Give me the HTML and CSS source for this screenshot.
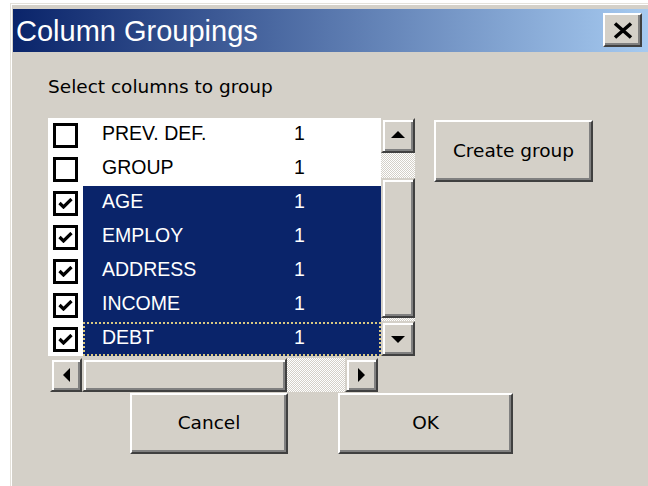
FILE: index.html
```html
<!DOCTYPE html>
<html lang="en">
<head>
<meta charset="utf-8">
<title>Column Groupings</title>
<link rel="stylesheet" href="styles.css">
</head>
<body>
<div class="window">
  <div class="titlebar">
    <span class="title">Column Groupings</span>
    <button class="close" type="button" aria-label="Close">
      <svg width="20" height="17" viewBox="0 0 20 17"><path d="M2 1.5 L18 15.5 M18 1.5 L2 15.5" stroke="#000" stroke-width="3.6" fill="none"/></svg>
    </button>
  </div>
  <div class="content">
    <p class="prompt">Select columns to group</p>
    <div class="main-row">
      <div class="listbox">
        <ul class="rows">
          <li class="row"><span class="check-cell"><span class="check"></span></span><span class="item"><span class="name">PREV. DEF.</span><span class="count">1</span></span></li>
          <li class="row"><span class="check-cell"><span class="check"></span></span><span class="item"><span class="name">GROUP</span><span class="count">1</span></span></li>
          <li class="row selected"><span class="check-cell"><span class="check"><svg width="15" height="11" viewBox="0 0 15 11"><path d="M1.5 5 L5.5 9 L13.5 1" stroke="#000" stroke-width="3.2" fill="none"/></svg></span></span><span class="item"><span class="name">AGE</span><span class="count">1</span></span></li>
          <li class="row selected"><span class="check-cell"><span class="check"><svg width="15" height="11" viewBox="0 0 15 11"><path d="M1.5 5 L5.5 9 L13.5 1" stroke="#000" stroke-width="3.2" fill="none"/></svg></span></span><span class="item"><span class="name">EMPLOY</span><span class="count">1</span></span></li>
          <li class="row selected"><span class="check-cell"><span class="check"><svg width="15" height="11" viewBox="0 0 15 11"><path d="M1.5 5 L5.5 9 L13.5 1" stroke="#000" stroke-width="3.2" fill="none"/></svg></span></span><span class="item"><span class="name">ADDRESS</span><span class="count">1</span></span></li>
          <li class="row selected"><span class="check-cell"><span class="check"><svg width="15" height="11" viewBox="0 0 15 11"><path d="M1.5 5 L5.5 9 L13.5 1" stroke="#000" stroke-width="3.2" fill="none"/></svg></span></span><span class="item"><span class="name">INCOME</span><span class="count">1</span></span></li>
          <li class="row selected focused"><span class="check-cell"><span class="check"><svg width="15" height="11" viewBox="0 0 15 11"><path d="M1.5 5 L5.5 9 L13.5 1" stroke="#000" stroke-width="3.2" fill="none"/></svg></span></span><span class="item"><span class="name">DEBT</span><span class="count">1</span></span></li>
        </ul>
        <div class="vscroll">
          <span class="sb-btn"><span class="arrow up"></span></span>
          <span class="track track-top"></span>
          <span class="thumb thumb-v"></span>
          <span class="track track-bottom"></span>
          <span class="sb-btn"><span class="arrow down"></span></span>
        </div>
        <div class="hscroll">
          <span class="sb-btn sb-left"><span class="arrow left"></span></span>
          <span class="thumb thumb-h"></span>
          <span class="track track-right"></span>
          <span class="sb-btn sb-right"><span class="arrow right"></span></span>
        </div>
      </div>
      <button class="btn create" type="button">Create group</button>
    </div>
    <div class="actions">
      <button class="btn cancel" type="button">Cancel</button>
      <button class="btn ok" type="button">OK</button>
    </div>
  </div>
</div>
</body>
</html>
```
FILE: styles.css
```css
* { box-sizing: border-box; }

html, body {
  margin: 0;
  height: 100%;
  overflow: hidden;
  background: #fff;
}

.window {
  margin: 3px 0 0 10px;
  height: calc(100% - 3px);
  background: #d4d0c8;
  border-top: 1px solid #e4e1da;
  border-left: 1px solid #e4e1da;
  box-shadow: inset 1px 1px #fff;
  padding: 5px 0 0 2px;
}

/* caption */
.titlebar {
  height: 43px;
  display: flex;
  align-items: center;
  justify-content: space-between;
  padding: 0 6px 0 3px;
  background: linear-gradient(to right, #0a246a, #a6caf0);
}

.title {
  color: #fff;
  font-family: "Liberation Sans", Arial, sans-serif;
  font-size: 29px;
  line-height: 1;
  padding-top: 2px;
}

.close {
  width: 39px;
  height: 34px;
  padding: 0;
  margin-top: -1px;
  display: flex;
  align-items: center;
  justify-content: center;
  background: #d4d0c8;
  border: 2px solid;
  border-color: #fff #404040 #404040 #fff;
  box-shadow: inset -2px -2px #808080;
}

/* dialog body */
.content {
  padding-left: 35px;
  font-family: "DejaVu Sans", Verdana, sans-serif;
  font-size: 18.5px;
  color: #000;
}

.prompt {
  margin: 0;
  padding-top: 24px;
  line-height: 22px;
  height: 66px;
}

.main-row {
  display: flex;
  align-items: flex-start;
  gap: 18px;
}

.listbox {
  display: grid;
  grid-template-columns: 333px 35px;
  grid-template-rows: 238px 36px;
}

.rows {
  list-style: none;
  margin: 0;
  padding: 0;
  background: #fff;
  font-family: "Liberation Sans", Arial, sans-serif;
  font-size: 19.5px;
}

.row {
  height: 34px;
  display: flex;
}

.check-cell {
  width: 35px;
  display: flex;
  align-items: center;
  padding-left: 5px;
}

.check {
  width: 25px;
  height: 25px;
  border: 3px solid #000;
  background: #fff;
  display: flex;
  align-items: center;
  justify-content: center;
}

.item {
  flex: 1;
  display: flex;
  align-items: center;
  padding: 0 0 4px 19px;
  color: #000;
}

.selected .item {
  background: #0a246a;
  color: #fff;
}

.focused .item {
  outline: 2px dotted #d9c882;
  outline-offset: -2px;
}

.name { width: 192px; }

/* scroll bars */
.sb-btn, .thumb {
  background: #d4d0c8;
  border: 2px solid;
  border-color: #d4d0c8 #404040 #404040 #d4d0c8;
  box-shadow: inset 2px 2px #fff, inset -2px -2px #808080;
  display: flex;
  align-items: center;
  justify-content: center;
}

.track {
  background-image: repeating-conic-gradient(#fff 0 25%, #d4d0c8 0 50%);
  background-size: 2px 2px;
}

.vscroll {
  width: 34px;
  display: flex;
  flex-direction: column;
}

.vscroll .sb-btn { height: 35px; }
.track-top { height: 25px; }
.thumb-v { height: 140px; }
.track-bottom { height: 3px; }

.hscroll {
  grid-column: 1;
  margin: 2px 0 0 2px;
  height: 34px;
  width: 328px;
  display: flex;
}

.sb-left { width: 32px; }
.thumb-h { width: 205px; }
.track-right { width: 58px; }
.sb-right { width: 33px; }

.arrow {
  width: 0;
  height: 0;
  border: 0 solid transparent;
}

.arrow.up { border-width: 0 7px 7px; border-bottom-color: #000; margin-top: -2px; }
.arrow.down { border-width: 7px 7px 0; border-top-color: #000; margin-top: 2px; }
.arrow.left { border-width: 7px 7px 7px 0; border-right-color: #000; }
.arrow.right { border-width: 7px 0 7px 7px; border-left-color: #000; }

/* push buttons */
.btn {
  font-family: "DejaVu Sans", Verdana, sans-serif;
  font-size: 18.5px;
  color: #000;
  background: #d4d0c8;
  border: 2px solid;
  border-color: #fff #404040 #404040 #fff;
  box-shadow: inset -2px -2px #808080;
  padding: 0 0 2px;
}

.create {
  width: 159px;
  height: 62px;
  margin-top: 2px;
}

.actions {
  display: flex;
  gap: 50px;
  margin: 1px 0 0 82px;
}

.cancel { width: 158px; height: 61px; }
.ok { width: 175px; height: 61px; }
```
